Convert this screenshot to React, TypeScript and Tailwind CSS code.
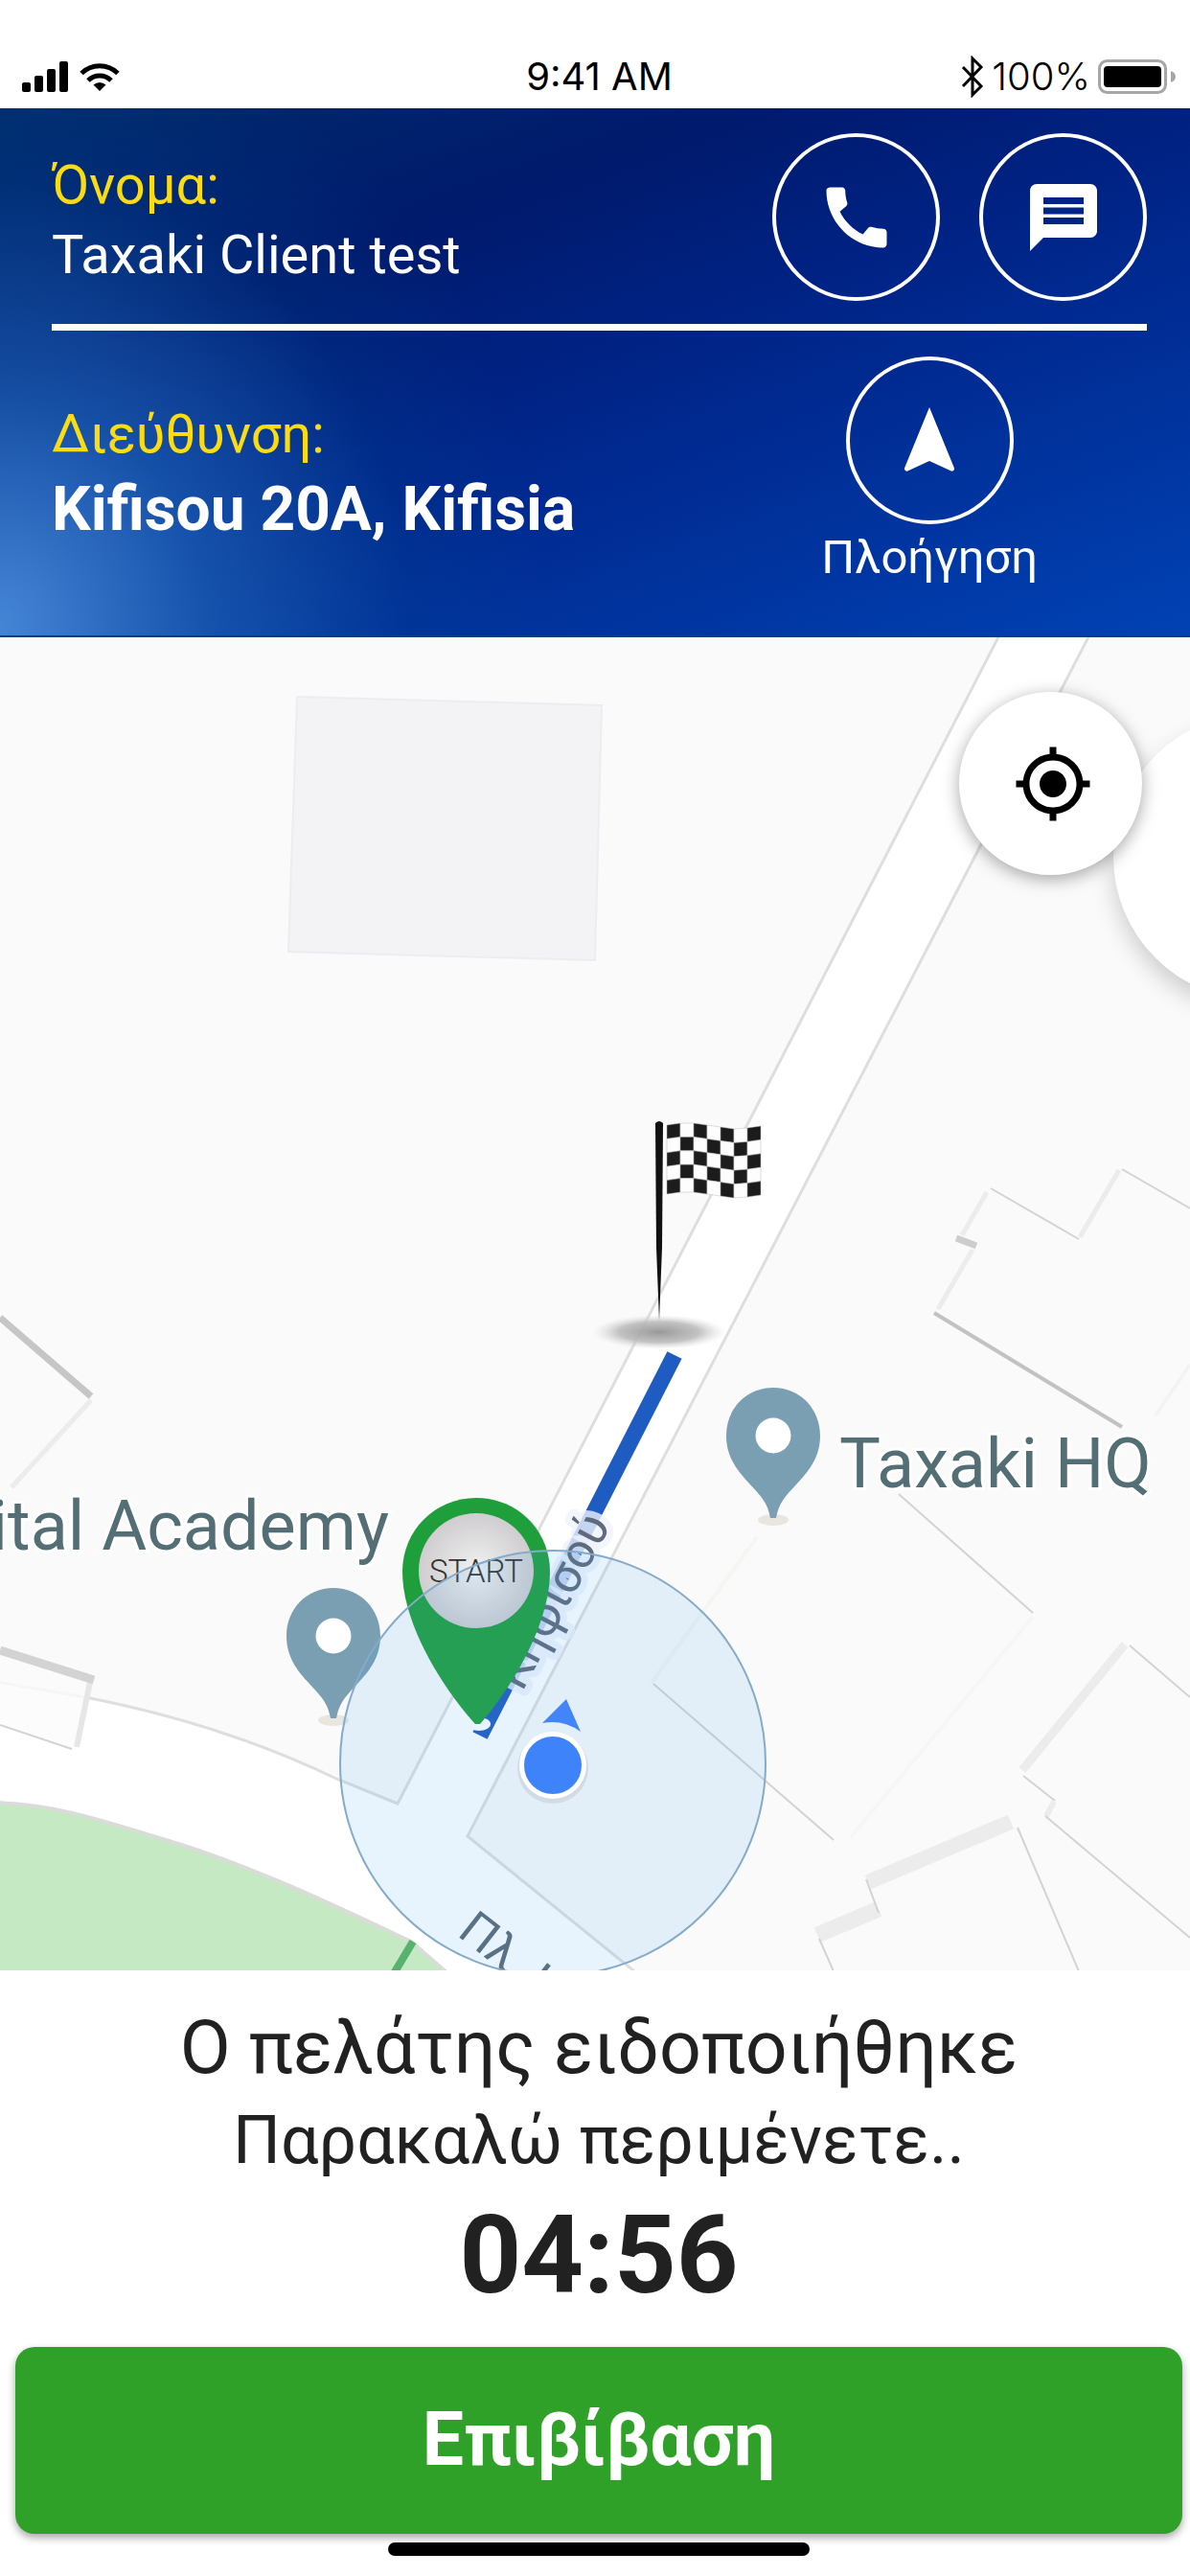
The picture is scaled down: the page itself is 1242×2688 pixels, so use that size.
import { useState } from 'react';
import { MdCall, MdMessage, MdMyLocation } from 'react-icons/md';

const FLAG_X = [696, 710, 724, 738, 752, 766, 780, 794];
const FLAG_Y = [1175, 1173, 1173, 1175, 1177, 1179, 1178, 1176];
const FLAG_ROW = 14.4;

function StatusBar() {
  return (
    <div className="grid grid-cols-3 items-end bg-white pt-[55px] pb-[9px] pl-[23px] pr-[14px] font-['Inter',sans-serif] text-black">
      <div className="flex h-[49px] items-center gap-3">
        <svg className="h-8 w-12" viewBox="0 0 48 32">
          <rect x="0" y="22" width="9" height="10" rx="2" />
          <rect x="13" y="15" width="9" height="17" rx="2" />
          <rect x="26" y="8" width="9" height="24" rx="2" />
          <rect x="39" y="0" width="9" height="32" rx="2" />
        </svg>
        <svg className="h-[30px] w-[42px]" viewBox="0 0 42 30" fill="none" stroke="#000" strokeWidth="5">
          <path d="M2 11.5a27 27 0 0 1 38 0" />
          <path d="M9 19a17 17 0 0 1 24 0" />
          <path d="M21 30l-6.500-6.500a9.500 9.500 0 0 1 13 0z" fill="#000" stroke="none" />
        </svg>
      </div>
      <div className="text-center text-[40px] leading-[49px]">9:41 AM</div>
      <div className="flex h-[49px] items-center justify-end">
        <svg className="h-[44px] w-[24px]" viewBox="0 0 24 44" fill="none" stroke="#000" strokeWidth="3">
          <path d="M2 12l19 20-9 9V3l9 9L2 32" />
        </svg>
        <span className="mx-2 text-[40px] font-light leading-[49px]">100%</span>
        <svg className="h-[36px] w-[82px]" viewBox="0 0 82 36">
          <rect x="1.500" y="1.500" width="69" height="33" rx="8" fill="none" stroke="#a6a6a6" strokeWidth="3" />
          <rect x="6" y="7" width="60" height="22" rx="4" />
          <path d="M76 12c3 1 5 3 5 6s-2 5-5 6z" fill="#a6a6a6" />
        </svg>
      </div>
    </div>
  );
}

function RideHeader() {
  const circle = 'flex size-[175px] items-center justify-center rounded-full border-4 border-white';

  return (
    <header className="border-b-2 border-[#0b3c7c] bg-[radial-gradient(ellipse_46%_115%_at_0%_98%,#4585d6_0%,rgba(30,100,185,0.7)_38%,rgba(0,75,150,0.2)_75%,rgba(0,70,160,0)_100%),linear-gradient(160deg,#002b6c_0%,#001a6c_28%,#002386_50%,#0142b4_100%)] pt-[26px] pr-[45px] pb-[47px] pl-[54px] text-white">
      <div className="flex items-start justify-between">
        <div className="pt-[18px] text-[56px] leading-[73px]">
          <div className="text-[#fbdc12]">Όνομα:</div>
          <div>Taxaki Client test</div>
        </div>
        <div className="flex gap-[41px]">
          <button className={circle} aria-label="Κλήση">
            <MdCall className="size-[84px]" />
          </button>
          <button className={circle} aria-label="Μήνυμα">
            <MdMessage className="size-[84px]" />
          </button>
        </div>
      </div>

      <hr className="mt-6 mb-[27px] h-[7px] border-0 bg-white" />

      <div className="flex items-start justify-between pr-[114px]">
        <div className="pt-[45px]">
          <div className="text-[56px] leading-[73px] text-[#fbdc12]">Διεύθυνση:</div>
          <div className="text-[64px] leading-[84px] font-bold">Kifisou 20A, Kifisia</div>
        </div>
        <button className="flex flex-col items-center">
          <span className={circle}>
            <svg className="size-[84px]" viewBox="0 0 24 24" fill="currentColor">
              <path d="M12 2L4.600 20.100c-.2.600.300 1.100.9.900L12 18l6.500 3c.6.200 1.100-.3.900-.9z" />
            </svg>
          </span>
          <span className="text-[49px] leading-[69px]">Πλοήγηση</span>
        </button>
      </div>
    </header>
  );
}

function PoiPin({ x, y }: { x: number; y: number }) {
  return (
    <g transform={`translate(${x} ${y})`}>
      <ellipse cx="0" cy="88" rx="16" ry="6" fill="#e9e6e0" />
      <path
        d="M0-50C-28-50-49-28-49 0c0 22 11 36 24 50C-12 64-6 70-3 86h6C6 70 12 64 25 50 38 36 49 22 49 0 49-28 28-50 0-50z"
        fill="#7a9fb2"
      />
      <circle r="18.500" fill="#fff" />
    </g>
  );
}

function Flag() {
  return (
    <g>
      <ellipse cx="688" cy="1391" rx="70" ry="18" fill="url(#flagShadow)" />
      <path d="M684 1173q4-4 8 0l-1 130-3 76-3-76z" fill="#111" />
      {FLAG_X.slice(0, 7).map((x, col) =>
        [0, 1, 2, 3, 4].map((row) => {
          const left = FLAG_Y[col] + row * FLAG_ROW;
          const right = FLAG_Y[col + 1] + row * FLAG_ROW;
          return (
            <polygon
              key={`${col}-${row}`}
              points={`${x},${left} ${x + 14},${right} ${x + 14},${right + FLAG_ROW} ${x},${left + FLAG_ROW}`}
              fill={(col + row) % 2 === 0 ? '#1c1c1c' : '#fdfdfd'}
              stroke="#bbb"
              strokeWidth="0.5"
            />
          );
        })
      )}
    </g>
  );
}

function RideMap() {
  return (
    <section className="relative overflow-hidden bg-[#fafafa]">
      <svg className="block w-full" viewBox="0 666 1242 1391" role="img" aria-label="Χάρτης">
        <defs>
          <radialGradient id="flagShadow">
            <stop offset="0" stopColor="#999" />
            <stop offset="0.600" stopColor="#b8b8b8" stopOpacity="0.850" />
            <stop offset="1" stopColor="#ddd" stopOpacity="0" />
          </radialGradient>
          <radialGradient id="startDisc">
            <stop offset="0" stopColor="#f2f2f2" />
            <stop offset="1" stopColor="#cfcdcf" />
          </radialGradient>
        </defs>

        {/* Roads */}
        <path
          d="M1045 660L415 1883 351 1857C270 1818 180 1790 94 1773L-8 1755V1882C60 1884 110 1902 163 1918 260 1946 350 1990 429 2027L474 2066H672L662 2058 488 1917 1139 660z"
          fill="#fff"
          stroke="#dedede"
          strokeWidth="3"
        />
        <path
          d="M-8 1882C60 1884 110 1902 163 1918 260 1946 350 1990 429 2027L474 2066H-8z"
          fill="#c4e9c3"
          stroke="#d9dcd8"
          strokeWidth="4"
        />
        <path d="M431 2027L410 2062" stroke="#57b26f" strokeWidth="8" />

        {/* Buildings */}
        <path d="M310 728L628 737 621 1003 301 994z" fill="#f3f3f5" stroke="#ededf1" strokeWidth="2" />
        <path d="M0 1723L98 1754 78 1825 0 1801z" fill="#fbfbfb" opacity="0.800" />
        <g fill="none" stroke="#ececec" strokeWidth="5">
          <path d="M95 1462L12 1553" />
          <path d="M94 1756L80 1824" stroke="#e6e6e6" strokeWidth="6" />
          <path d="M1004 1290L1030 1245" />
          <path d="M1127 1292L1168 1222" />
          <path d="M1015 1305L979 1367" />
          <path d="M1174 1717L1067 1848" strokeWidth="9" />
          <path d="M1055 1902L906 1965" strokeWidth="16" />
          <path d="M917 1993L853 2020" strokeWidth="17" />
          <path d="M1100 1881L1092 1896" strokeWidth="6" />
          <path d="M790 1605L680 1757" stroke="#f5f5f2" strokeWidth="4" />
          <path d="M1078 1688L888 1918" stroke="#f6f6f6" strokeWidth="4" />
          <path d="M1242 1425L1206 1478" stroke="#f3f3f3" strokeWidth="4" />
        </g>
        <g fill="none" stroke="#d3d3d3" strokeWidth="2">
          <path d="M0 1376L95 1458" stroke="#c6c6c6" strokeWidth="7" />
          <path d="M0 1723L98 1754" strokeWidth="9" />
          <path d="M0 1801L75 1826" />
          <path d="M1034 1241L1126 1294" />
          <path d="M1171 1221L1242 1262" />
          <path d="M998 1293L1019 1301" stroke="#cdcdcd" strokeWidth="7" />
          <path d="M975 1371L1171 1490" stroke="#c2c2c2" strokeWidth="4" />
          <path d="M938 1560L1078 1684" />
          <path d="M682 1758L870 1921" />
          <path d="M1179 1718L1242 1772" />
          <path d="M1068 1854L1101 1880" />
          <path d="M1091 1896L1242 2023" />
          <path d="M904 1962L917 1997" />
          <path d="M855 2024L870 2058" />
          <path d="M1062 1908L1126 2058" />
        </g>

        {/* Route */}
        <path d="M704 1415L501 1812" stroke="#1f5cc2" strokeWidth="17" />
        <text
          transform="translate(545 1767) rotate(-62)"
          fontSize="51"
          fill="#5f6b7c"
          stroke="#eff3fd"
          strokeOpacity="0.800"
          strokeWidth="14"
          strokeLinejoin="round"
          paintOrder="stroke"
        >
          Κηφισού
        </text>
        <text transform="translate(476 2020) rotate(38)" fontSize="50" fill="#5b6b73">
          Πλ. Κ
        </text>

        {/* Places */}
        <g fontSize="72" fill="#546e75" stroke="#fff" strokeWidth="6" paintOrder="stroke">
          <text x="406" y="1618" textAnchor="end">ital Academy</text>
          <text x="876" y="1553">Taxaki HQ</text>
        </g>
        <PoiPin x={807} y={1499} />
        <PoiPin x={348} y={1708} />

        <Flag />

        {/* Start marker */}
        <ellipse cx="500" cy="1800" rx="12" ry="7" fill="#fff" />
        <path
          d="M497 1564c-43 0-77 34-77 77 0 56 44 124 76 159h5c31-35 73-103 73-159 0-43-34-77-77-77z"
          fill="#1f9f3c"
        />
        <circle cx="497" cy="1640" r="60" fill="url(#startDisc)" />
        <text x="497" y="1652" textAnchor="middle" fontSize="33" fontWeight="300" fill="#333">
          START
        </text>

        {/* Current position */}
        <circle cx="577" cy="1841" r="222" fill="#46a3f0" fillOpacity="0.130" stroke="#84abc9" strokeWidth="2" />
        <path d="M591 1774L566 1799Q588 1795 606 1808z" fill="#4285f8" />
        <circle cx="577" cy="1846" r="37" fill="#000" opacity="0.080" />
        <circle cx="577" cy="1843" r="32.500" fill="#3f83fb" stroke="#fff" strokeWidth="5" />
      </svg>

      <div className="absolute top-[80px] -right-[218px] size-[298px] rounded-full bg-white shadow-[0_12px_24px_rgba(0,0,0,0.180)]" />
      <button
        aria-label="Η τοποθεσία μου"
        className="absolute top-[57px] right-[50px] flex size-[191px] items-center justify-center rounded-full bg-white pl-1 text-black shadow-[0_4px_18px_rgba(0,0,0,0.350)]"
      >
        <MdMyLocation className="size-[84px]" />
      </button>
    </section>
  );
}

export default function App() {
  const [seconds] = useState(296);
  const minutes = String(Math.floor(seconds / 60)).padStart(2, '0');
  const rest = String(seconds % 60).padStart(2, '0');

  return (
    <div className="min-h-screen bg-white font-['Roboto',sans-serif]">
      <StatusBar />
      <RideHeader />
      <RideMap />

      <section className="pt-[34px] pr-2 pb-5 pl-4 text-center text-[#212121]">
        <p className="text-[77px] leading-[94px]">Ο πελάτης ειδοποιήθηκε</p>
        <p className="text-[70px] leading-[98px]">Παρακαλώ περιμένετε..</p>
        <p className="text-[113px] leading-[144px] font-bold">
          {minutes}:{rest}
        </p>
        <button className="mt-[23px] h-[195px] w-full rounded-[20px] bg-[#2fa129] text-[77px] font-bold text-white shadow-[0_4px_8px_rgba(0,0,0,0.350)]">
          Επιβίβαση
        </button>
        <div className="mx-auto mt-[9px] h-[14px] w-[440px] rounded-full bg-black" />
      </section>
    </div>
  );
}
